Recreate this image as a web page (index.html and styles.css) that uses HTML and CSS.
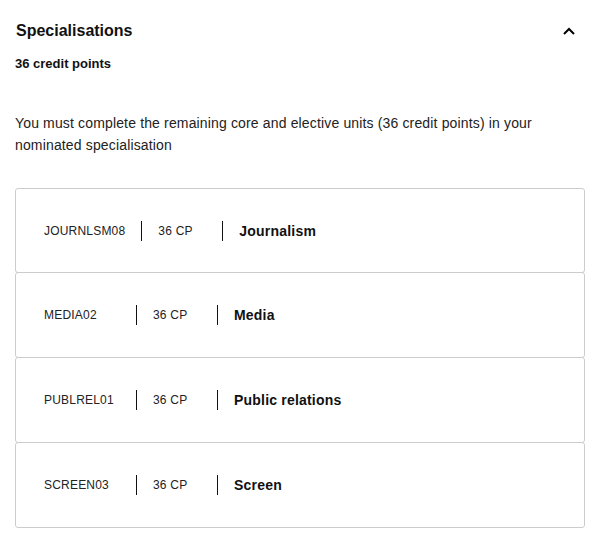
FILE: index.html
```html
<!DOCTYPE html>
<html lang="en">

<head>
    <meta charset="UTF-8">
    <meta name="viewport" content="width=device-width, initial-scale=1.0">
    <title>Specialisations</title>
    <link rel="stylesheet" href="styles.css">
</head>

<body>
    <section class="panel">
        <!-- Accordion header -->
        <div class="panel-header">
            <h2>Specialisations</h2>
            <svg class="chevron" width="14" height="10" viewBox="0 0 14 10">
                <path d="M2 8 L7 3 L12 8" fill="none" stroke="#000" stroke-width="2"/>
            </svg>
        </div>
        <div class="credits">36 credit points</div>
        <p class="intro">You must complete the remaining core and elective units (36 credit points) in your nominated specialisation</p>

        <!-- Specialisation list -->
        <ul class="spec-list">
            <li class="spec">
                <span class="spec-code">JOURNLSM08</span>
                <span class="spec-cp">36 CP</span>
                <span class="spec-name">Journalism</span>
            </li>
            <li class="spec">
                <span class="spec-code">MEDIA02</span>
                <span class="spec-cp">36 CP</span>
                <span class="spec-name">Media</span>
            </li>
            <li class="spec">
                <span class="spec-code">PUBLREL01</span>
                <span class="spec-cp">36 CP</span>
                <span class="spec-name">Public relations</span>
            </li>
            <li class="spec">
                <span class="spec-code">SCREEN03</span>
                <span class="spec-cp">36 CP</span>
                <span class="spec-name">Screen</span>
            </li>
        </ul>
    </section>
</body>

</html>
```

FILE: styles.css
```css
/* Global Styles */
body {
    font-family: Arial, 'Liberation Sans', Helvetica, sans-serif;
    margin: 0;
    padding: 0;
    background-color: #fff;
    color: #222;
}

/* Panel */
.panel {
    width: 570px;
    padding: 0 15px;
}

.panel-header {
    display: flex;
    justify-content: space-between;
    align-items: center;
    padding-top: 21px;
}

.panel-header h2 {
    margin: 0 0 0 1px;
    font-size: 16px;
    line-height: 20px;
    font-weight: bold;
    color: #111;
}

.chevron {
    margin-right: 9px;
}

.credits {
    margin-top: 14px;
    font-size: 13px;
    line-height: 18px;
    font-weight: bold;
    color: #111;
}

.intro {
    margin: 39px 0 32px;
    font-size: 14px;
    line-height: 22px;
    letter-spacing: 0.15px;
    color: #222;
}

/* Specialisation list */
.spec-list {
    list-style: none;
    margin: 0;
    padding: 0;
}

.spec {
    display: flex;
    align-items: center;
    padding: 32px 28px;
    border: 1px solid #ccc;
    border-radius: 3px;
    margin-top: -1px;
}

.spec:first-child {
    margin-top: 0;
    padding-bottom: 31px;
}

.spec-code,
.spec-cp,
.spec-name {
    line-height: 20px;
    letter-spacing: 0.2px;
}

.spec-code {
    min-width: 76px;
    padding-right: 16px;
    font-size: 12px;
    color: #222;
}

.spec-cp {
    min-width: 48px;
    padding: 0 16px;
    font-size: 12px;
    color: #222;
    border-left: 1px solid #111;
}

.spec-name {
    padding-left: 16px;
    font-size: 14px;
    font-weight: bold;
    color: #111;
    border-left: 1px solid #111;
}
```
